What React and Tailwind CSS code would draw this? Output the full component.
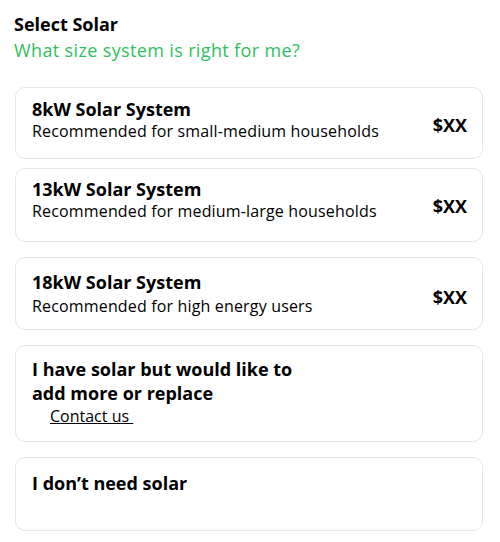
import React from "react";

const options = [
  { title: "8kW Solar System", sub: "Recommended for small-medium households", price: "$XX", card: "mt-0 h-[72px] pt-[10px]", subGap: "" },
  { title: "13kW Solar System", sub: "Recommended for medium-large households", price: "$XX", card: "mt-[9px] h-[74px] pt-[9px]", subGap: "" },
  { title: "18kW Solar System", sub: "Recommended for high energy users", price: "$XX", card: "mt-[15px] h-[73px] pt-[13px]", subGap: "mt-[2px]" },
];

const App = () => {
  return (
    <div
      className="min-h-screen bg-white text-black px-[15px] pt-[11px] pb-4"
      style={{ fontFamily: '"Open Sans", "Noto Sans", sans-serif' }}
    >
      <h1 className="text-[18px] font-bold leading-[26px] ml-[-1px]">Select Solar</h1>
      <p className="text-[18px] leading-[26px] tracking-[0.02em] text-[#2fbf62] ml-[-1px]">
        What size system is right for me?
      </p>

      <div className="mt-[24px] w-[468px] flex flex-col">
        {options.map((o) => (
          <div
            key={o.title}
            className={`${o.card} rounded-[10px] border border-[#e3e7e8] pl-[16px] pr-[15px] flex items-start justify-between`}
          >
            <div>
              <div className="text-[18px] font-bold leading-[22px]">{o.title}</div>
              <div className={`${o.subGap} text-[16px] leading-[22px] tracking-[0.01em]`}>{o.sub}</div>
            </div>
            <div className="self-center -mt-[6px] text-[18px] font-bold">{o.price}</div>
          </div>
        ))}

        <div className="mt-[15px] h-[97px] rounded-[10px] border border-[#e3e7e8] pl-[16px] pt-[11px]">
          <div className="text-[18px] font-bold leading-[24px] w-[280px]">
            I have solar but would like to add more or replace
          </div>
          <a className="block ml-[18px] text-[16px] leading-[22px] underline w-fit">Contact us&nbsp;</a>
        </div>

        <div className="mt-[15px] h-[74px] rounded-[10px] border border-[#e3e7e8] pl-[16px] pt-[14px]">
          <div className="text-[18px] font-bold leading-[22px]">I don’t need solar</div>
        </div>
      </div>
    </div>
  );
};

export default App;
